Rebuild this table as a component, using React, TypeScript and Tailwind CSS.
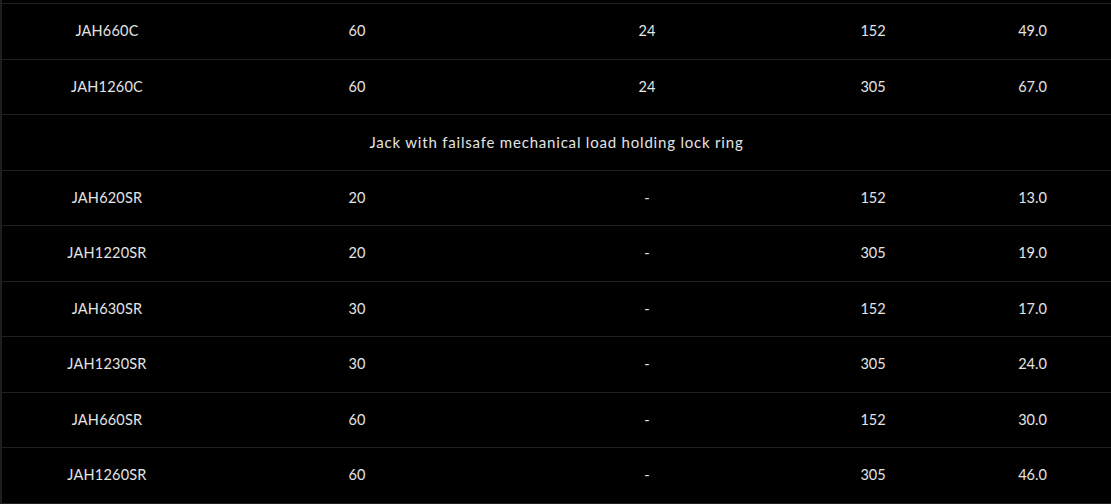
import React from "react";

type Row = { model: string; load: string; stroke: string; travel: string; weight: string };

const TOP: Row[] = [
  { model: "JAH660C", load: "60", stroke: "24", travel: "152", weight: "49.0" },
  { model: "JAH1260C", load: "60", stroke: "24", travel: "305", weight: "67.0" },
];

const LOCK: Row[] = [
  { model: "JAH620SR", load: "20", stroke: "-", travel: "152", weight: "13.0" },
  { model: "JAH1220SR", load: "20", stroke: "-", travel: "305", weight: "19.0" },
  { model: "JAH630SR", load: "30", stroke: "-", travel: "152", weight: "17.0" },
  { model: "JAH1230SR", load: "30", stroke: "-", travel: "305", weight: "24.0" },
  { model: "JAH660SR", load: "60", stroke: "-", travel: "152", weight: "30.0" },
  { model: "JAH1260SR", load: "60", stroke: "-", travel: "305", weight: "46.0" },
];

function DataRow({ row }: { row: Row }) {
  return (
    <div className="flex h-[55.5px] items-center border-b border-[#1f1f1f]">
      <div className="w-[210px] text-center tracking-[0.2px]">{row.model}</div>
      <div className="w-[290px] text-center">{row.load}</div>
      <div className="w-[290px] text-center">{row.stroke}</div>
      <div className="w-[162px] text-center">{row.travel}</div>
      <div className="w-[157px] text-center">{row.weight}</div>
    </div>
  );
}

export default function App() {
  return (
    <div
      className="w-[1111px] h-[504px] overflow-hidden bg-black text-[#e4e4e4] text-[14.5px] border-l-2 border-[#1b1f23]"
      style={{ fontFamily: '"Lato", "Liberation Sans", sans-serif' }}
    >
      <div className="h-[4px] border-b border-[#1f1f1f]" />
      {TOP.map((r) => (
        <DataRow key={r.model} row={r} />
      ))}
      {/* section heading row */}
      <div className="flex h-[55.5px] items-center justify-center border-b border-[#1f1f1f] text-[15px] tracking-[0.8px]">
        Jack with failsafe mechanical load holding lock ring
      </div>
      {LOCK.map((r) => (
        <DataRow key={r.model} row={r} />
      ))}
    </div>
  );
}
